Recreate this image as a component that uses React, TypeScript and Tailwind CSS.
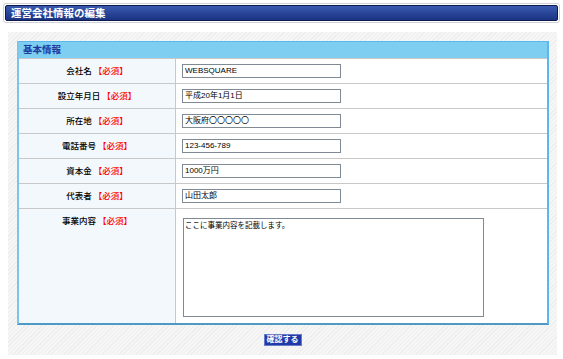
import React from "react";

const font = "font-['Liberation_Sans','Noto_Sans_CJK_JP',sans-serif]";

const rows = [
  { label: "会社名", value: "WEBSQUARE" },
  { label: "設立年月日", value: "平成20年1月1日" },
  { label: "所在地", value: "大阪府〇〇〇〇〇" },
  { label: "電話番号", value: "123-456-789" },
  { label: "資本金", value: "1000万円" },
  { label: "代表者", value: "山田太郎" },
];

function Required() {
  return (
    <span className="ml-[2px] whitespace-nowrap text-[#ff0000]">
      【必須】
    </span>
  );
}

export default function App() {
  return (
    <div className={`w-[563px] h-[359px] bg-white pt-[3px] ${font}`}>
      <div className="mx-[3px] h-[20px] rounded-[3px] border border-[#d0d0d8] p-px">
        <div className="h-full rounded-[2px] border border-[#0c1a4c] bg-gradient-to-b from-[#3a5ab0] to-[#1b3282] flex items-center pl-[5px]">
          <span className="text-[10.5px] font-bold text-white leading-none">
            運営会社情報の編集
          </span>
        </div>
      </div>

      <div className="ml-[8px] mr-[6px] mt-[9px] h-[323px] pt-[9px] pl-[9px] pr-[8px] bg-[repeating-linear-gradient(135deg,#eeeeee_0px,#eeeeee_1px,#f6f6f6_1px,#f6f6f6_3px)]">
        <div className="border-l-2 border-r-2 border-b-2 border-l-[#7cc4ea] border-r-[#5ab8ec] border-b-[#4f9ac4] bg-white">
          <div className="h-[17px] bg-[#7ecef2] border-t border-[#5ab8ec] flex items-center pl-[4px]">
            <span className="text-[9.5px] font-bold text-[#1a3aa0] leading-none">基本情報</span>
          </div>
          {rows.map((r) => (
            <div key={r.label} className="grid grid-cols-[157px_1fr] h-[25px] border-t border-[#c8c8c8]">
              <div className="flex items-center justify-center whitespace-nowrap bg-[#f3f8fc] border-r border-[#c8c8c8] text-[8.5px] font-medium text-black">
                <span>{r.label}</span>
                <Required />
              </div>
              <div className="flex items-center pl-[6px]">
                <div className="w-[159px] h-[14px] border border-[#7f8a94] bg-white flex items-center pl-[2px] text-[8px] text-black leading-none">
                  {r.value}
                </div>
              </div>
            </div>
          ))}
          <div className="grid grid-cols-[157px_1fr] h-[115px] border-t border-[#c8c8c8]">
            <div className="flex justify-center items-start whitespace-nowrap pt-[8px] bg-[#f3f8fc] border-r border-[#c8c8c8] text-[8.5px] font-medium text-black leading-none">
              <span>事業内容</span>
              <Required />
            </div>
            <div className="pl-[7px] pt-[9px]">
              <div className="w-[301px] h-[99px] border border-[#7f8a94] bg-white pl-px pt-[2px] text-[7.5px] text-black leading-[10px]">
                ここに事業内容を記載します。
              </div>
            </div>
          </div>
        </div>
        <div className="flex justify-center mt-[9px] pr-[1px]">
          <button className="h-[12px] px-[2px] bg-[#1f3aa8] border border-[#6a7cc8] text-white text-[8px] font-bold leading-none">
            確認する
          </button>
        </div>
      </div>
    </div>
  );
}
